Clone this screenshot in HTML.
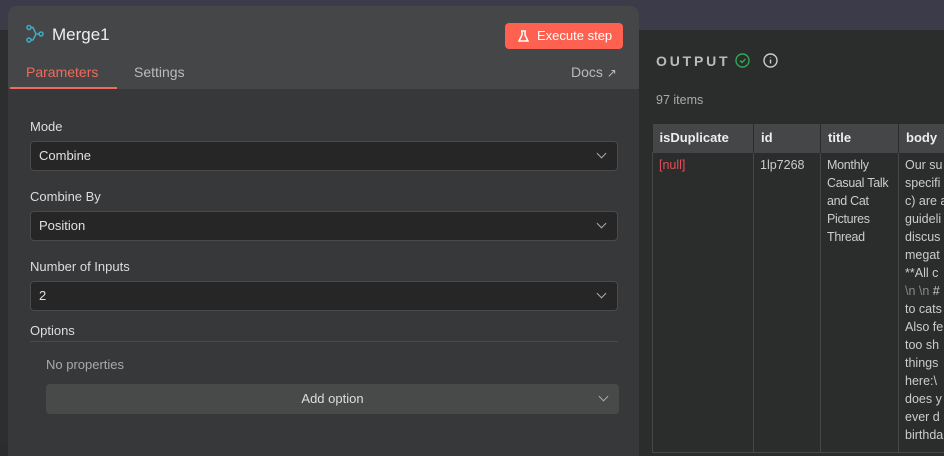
<!DOCTYPE html>
<html><head><style>
*{box-sizing:border-box;margin:0;padding:0}
body{width:944px;height:445px;overflow:hidden;background:#2b2c2c;font-family:"Liberation Sans",sans-serif;position:relative;color:#e0e0e0}
.top{position:absolute;left:0;top:0;width:944px;height:30px;background:#3b3b49}
.panel{position:absolute;left:8px;top:6px;width:631px;height:450px;background:#37383a;border-radius:9px 9px 0 0;overflow:hidden}
.head{height:83px;background:#454647;position:relative}
.title{position:absolute;left:44px;top:19px;font-size:17px;color:#eee}
.btn{position:absolute;left:497px;top:17px;width:118px;height:26px;background:#ff6150;border-radius:4px;color:#fff;font-size:13px;line-height:26px;padding-left:32px}
.tab{position:absolute;top:58px;font-size:14px}
.lbl{position:absolute;left:22px;font-size:13px;color:#ddd}
.sel{position:absolute;left:22px;width:588px;height:30px;background:#262626;border:1px solid #4a4a4a;border-radius:4px;font-size:13px;line-height:28px;padding-left:8px;color:#e0e0e0}
.chev{position:absolute;right:12px;top:8px;width:7px;height:7px;border-right:1px solid #aaa;border-bottom:1px solid #aaa;transform:rotate(45deg)}
table{position:absolute;left:652px;top:124px;border-collapse:collapse;font-size:12.5px;color:#ccc;table-layout:fixed;width:320px}
th{background:#454647;text-align:left;height:28px;padding:0 7px;font-weight:bold;color:#eee;border-right:1px solid #2b2c2c;font-size:13px;overflow:hidden;white-space:nowrap}
td{vertical-align:top;padding:3px 6px;line-height:18px;border:1px solid #454647;height:300px;overflow:hidden}
</style></head><body>
<div class="top"></div>
<div style="position:absolute;left:0;top:30px;width:8px;height:415px;background:#2d2e2e"></div>
<div class="panel">
 <div class="head">
  <svg style="position:absolute;left:17px;top:18px" width="20" height="20" viewBox="0 0 20 20" fill="none" stroke="#3fa8c4" stroke-width="1.6"><circle cx="4" cy="3.5" r="2"/><circle cx="4" cy="16" r="2"/><circle cx="16" cy="10" r="2"/><path d="M6 3.5h2l3 6.5h3M6 16h2l3-6"/></svg>
  <div class="title">Merge1</div>
  <div class="btn"><svg style="position:absolute;left:13px;top:7px" width="11" height="12" viewBox="0 0 11 12" fill="none" stroke="#fff" stroke-width="1.5"><path d="M3 1h5M4 1v4L1 11h9L7 5V1"/></svg>Execute step</div>
  <div class="tab" style="left:18px;color:#f26a5a">Parameters</div>
  <div style="position:absolute;left:2px;top:81px;width:107px;height:2px;background:#f26a5a"></div>
  <div class="tab" style="left:126px;color:#bbb">Settings</div>
  <div class="tab" style="left:563px;color:#bbb">Docs <span style="font-size:12px">↗</span></div>
 </div>
 <div class="lbl" style="top:113px">Mode</div>
 <div class="sel" style="top:135px">Combine<div class="chev"></div></div>
 <div class="lbl" style="top:183px">Combine By</div>
 <div class="sel" style="top:205px">Position<div class="chev"></div></div>
 <div class="lbl" style="top:253px">Number of Inputs</div>
 <div class="sel" style="top:275px">2<div class="chev"></div></div>
 <div class="lbl" style="top:317px">Options</div>
 <div style="position:absolute;left:22px;top:335px;width:588px;height:1px;background:#4a4a4a"></div>
 <div style="position:absolute;left:38px;top:351px;font-size:13px;color:#aaa">No properties</div>
 <div style="position:absolute;left:38px;top:378px;width:573px;height:30px;background:#484949;border-radius:4px;text-align:center;line-height:30px;font-size:13px;color:#ddd">Add option<div class="chev" style="top:9px"></div></div>
</div>
<div style="position:absolute;left:656px;top:53px;font-size:14px;letter-spacing:2.8px;color:#bbb;font-weight:bold">OUTPUT</div>
<svg style="position:absolute;left:735px;top:53px" width="15" height="15" viewBox="0 0 15 15" fill="none" stroke="#2fa85a" stroke-width="1.4"><circle cx="7.5" cy="7.5" r="6.5"/><path d="M5 7.5l2 2 3.5-3.5"/></svg>
<svg style="position:absolute;left:763px;top:53px" width="15" height="15" viewBox="0 0 15 15" fill="none" stroke="#ccc" stroke-width="1.4"><circle cx="7.5" cy="7.5" r="6.5"/><path d="M7.5 6.5v4M7.5 4v.5"/></svg>
<div style="position:absolute;left:656px;top:93px;font-size:12.5px;color:#aaa">97 items</div>
<table>
<colgroup><col style="width:101px"><col style="width:67px"><col style="width:78px"><col style="width:74px"></colgroup>
<tr><th>isDuplicate</th><th>id</th><th>title</th><th>body</th></tr>
<tr><td style="color:#e0505a">[null]</td><td>1lp7268</td><td style="letter-spacing:-0.3px">Monthly Casual&nbsp;Talk and Cat Pictures Thread</td><td style="white-space:nowrap">Our su<br>specifi<br>c) are a<br>guideli<br>discus<br>megat<br>**All c<br><span style="color:#888">\n \n</span> #<br>to cats<br>Also fe<br>too sh<br>things<br>here:\<br>does y<br>ever d<br>birthda</td></tr>
</table>
</body></html>
